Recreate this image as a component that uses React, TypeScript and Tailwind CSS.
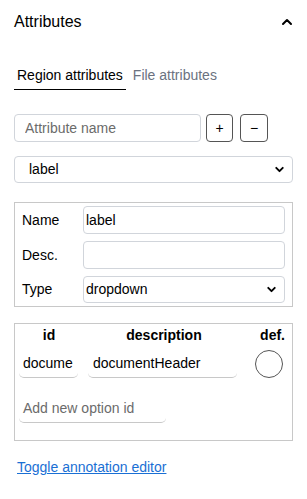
import { ChevronDown, ChevronUp } from 'lucide-react';

export default function App() {
  return (
    <div className="w-[307px] h-[499px] bg-white text-black font-['Liberation_Sans',Arial,sans-serif] overflow-hidden">
      {/* Header */}
      <div className="flex items-center justify-between pl-[14px] pr-[12px] h-[44px]">
        <span className="text-[16px]">Attributes</span>
        <ChevronUp size={16} strokeWidth={3} />
      </div>

      {/* Tabs */}
      <div className="flex items-end gap-[7px] px-[14px] mt-[21px]">
        <div className="px-[3px] pb-[3px] border-b-[1.5px] border-black text-[14px]">Region attributes</div>
        <div className="pb-[4px] text-[14px] text-[#6b7280]">File attributes</div>
      </div>

      <div className="px-[14px] mt-[24px]">
        {/* New attribute row */}
        <div className="flex items-center gap-[5px]">
          <input
            placeholder="Attribute name"
            className="w-[187px] h-[28px] px-[10px] text-[14px] border border-[#d1d5db] rounded-[4px] placeholder:text-[#6b6b6b] outline-none"
          />
          <button className="w-[27px] h-[28px] border border-[#555] rounded-[4px] text-[14px] flex items-center justify-center">+</button>
          <button className="ml-[2px] w-[28px] h-[28px] border border-[#555] rounded-[4px] text-[14px] flex items-center justify-center">−</button>
        </div>

        {/* Attribute select */}
        <div className="mt-[14px] h-[27px] border border-[#d1d5db] rounded-[4px] flex items-center justify-between pl-[14px] pr-[6px] text-[14px]">
          <span>label</span>
          <ChevronDown size={13} strokeWidth={3.5} />
        </div>

        {/* Attribute props */}
        <div className="mt-[19px] border border-[#c8c8c8] px-[7px] pt-[3px] pb-[3px] flex flex-col gap-[7px]">
          <div className="flex items-center">
            <span className="w-[61px] text-[14px]">Name</span>
            <div className="flex-1 h-[28px] border border-[#d1d5db] rounded-[4px] px-[2px] flex items-center text-[14px]">label</div>
          </div>
          <div className="flex items-center">
            <span className="w-[61px] text-[14px]">Desc.</span>
            <div className="flex-1 h-[28px] border border-[#d1d5db] rounded-[4px]" />
          </div>
          <div className="flex items-center">
            <span className="w-[61px] text-[14px]">Type</span>
            <div className="flex-1 h-[27px] border border-[#d1d5db] rounded-[4px] pl-[2px] pr-[6px] flex items-center justify-between text-[14px]">
              <span>dropdown</span>
              <ChevronDown size={13} strokeWidth={3.5} />
            </div>
          </div>
        </div>

        {/* Options */}
        <div className="mt-[16px] border border-[#c8c8c8] h-[118px] px-[4px] pt-[3px]">
          <div className="flex text-[14px] font-bold h-[16px] items-center">
            <span className="w-[60px] text-center">id</span>
            <span className="w-[170px] text-center">description</span>
            <span className="flex-1 text-right pr-[3px]">def.</span>
          </div>
          <div className="flex items-center mt-[7px]">
            <div className="w-[59px] h-[27px] flex items-center px-[4px] text-[14px] border-b border-[#c8c8c8] rounded-[5px]">docume</div>
            <div className="ml-[10px] w-[149px] h-[27px] flex items-center px-[5px] text-[14px] border-b border-[#c8c8c8] rounded-[5px]">documentHeader</div>
            <div className="ml-[18px] w-[28px] h-[28px] rounded-full border border-[#555]" />
          </div>
          <div className="mt-[17px] w-[147px] h-[28px] flex items-center px-[4px] text-[14px] text-[#6b6b6b] border-b border-[#c8c8c8] rounded-[5px]">Add new option id</div>
        </div>

        {/* Link */}
        <a href="#" className="block mt-[16px] ml-[3px] text-[14px] text-[#1a6fd4] underline">Toggle annotation editor</a>
      </div>
    </div>
  );
}
